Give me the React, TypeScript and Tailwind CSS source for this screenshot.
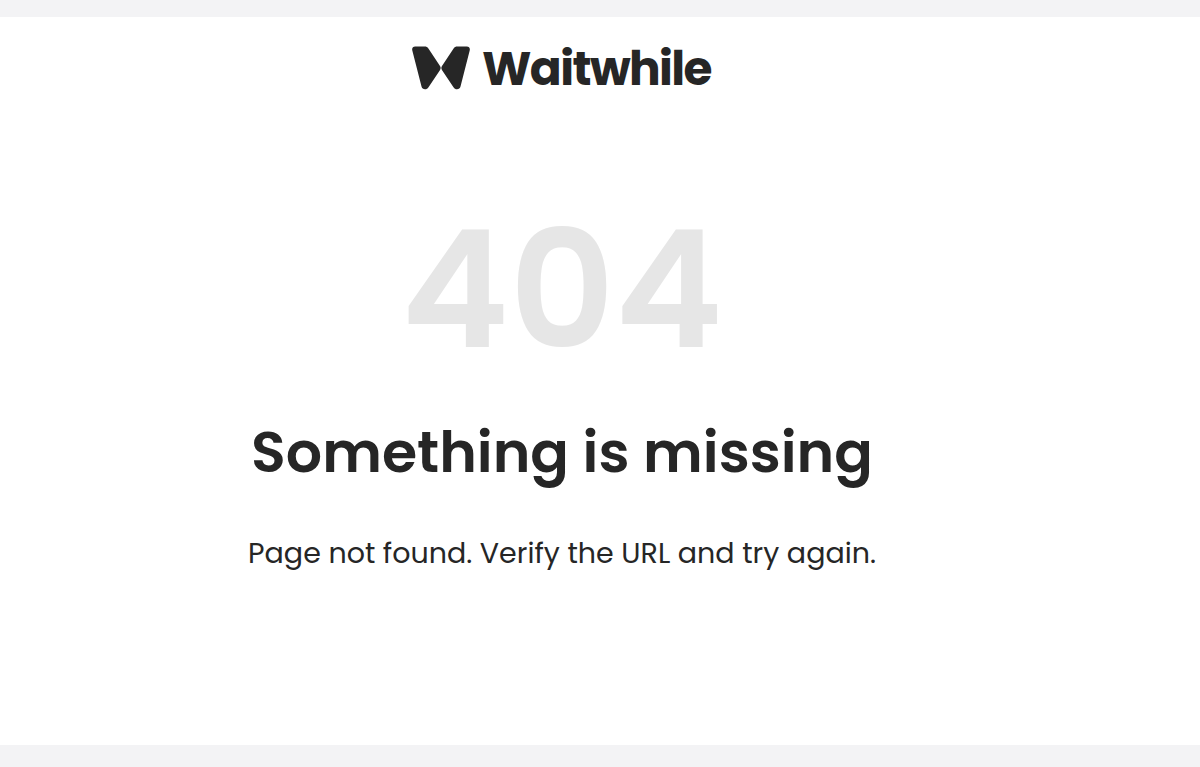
function ButterflyMark() {
  return (
    <svg viewBox="0 0 58 44" className="h-[44px] w-[58px] shrink-0 fill-current" aria-hidden="true">
      <path d="M3.2 0.5H12.6C14.3 0.5 15.4 1 16.4 2.4L28 20C28.9 21.4 28.9 22.9 27.9 24.3L16.5 41.2C15.5 42.6 14.5 43.3 13 43.3C11.2 43.3 10 42.3 9.5 40.5L0.3 4.4C-0.3 2.1 0.9 0.5 3.2 0.5Z" />
      <path d="M54.8 0.5H45.4C43.7 0.5 42.6 1 41.6 2.4L30 20C29.1 21.4 29.1 22.9 30.1 24.3L41.5 41.2C42.5 42.6 43.5 43.3 45 43.3C46.8 43.3 48 42.3 48.5 40.5L57.7 4.4C58.3 2.1 57.1 0.5 54.8 0.5Z" />
    </svg>
  )
}

function Logo() {
  return (
    <div className="flex h-[44px] items-center gap-[12px]">
      <ButterflyMark />
      <span className="w-[230px] whitespace-nowrap pt-px text-[47px] leading-[47px] font-bold tracking-[-1.6px]">
        Waitwhile
      </span>
    </div>
  )
}

export default function App() {
  return (
    <div className="h-[767px] overflow-hidden bg-[#f3f3f5] pt-[17px] font-['Poppins','Inter',sans-serif] text-[#262626]">
      <main className="flex h-[728px] flex-col items-center bg-white pt-[29px] pr-[76px]">
        <Logo />
        <p className="mt-[120px] text-[163.5px] leading-[160px] font-semibold whitespace-nowrap text-[#e6e6e6]">
          404
        </p>
        <h1 className="mt-[46px] text-[57px] leading-[72px] font-semibold whitespace-nowrap">
          Something is missing
        </h1>
        <p className="mt-[45px] text-[28.5px] leading-[40px] whitespace-nowrap">
          Page not found. Verify the URL and try again.
        </p>
      </main>
    </div>
  )
}
